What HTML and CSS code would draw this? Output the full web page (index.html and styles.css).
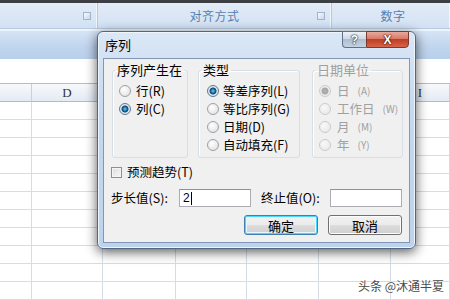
FILE: index.html
```html
<!DOCTYPE html>
<html lang="zh-CN">
<head>
    <meta charset="UTF-8">
    <meta name="viewport" content="width=device-width, initial-scale=1.0">
    <title>序列</title>
    <link rel="stylesheet" href="styles.css">
</head>
<body>
    <div class="app">
        <div class="topline"></div>
        <div class="ribbon-labels">
            <div class="rgroup g1"><span class="launcher"></span></div>
            <div class="rgroup g2"><span class="rlabel">对齐方式</span><span class="launcher"></span></div>
            <div class="rgroup g3"><span class="rlabel">数字</span></div>
        </div>
        <div class="ribbon-base"></div>
        <div class="formula-bar"></div>

        <!-- headers E..H sit under the dialog, so they stay empty -->
        <div class="sheet">
            <div class="hcell"></div><div class="hcell">D</div><div class="hcell"></div><div class="hcell"></div><div class="hcell"></div><div class="hcell"></div><div class="hcell">I</div>
            <div class="cell"></div><div class="cell"></div><div class="cell"></div><div class="cell"></div><div class="cell"></div><div class="cell"></div><div class="cell"></div>
            <div class="cell"></div><div class="cell"></div><div class="cell"></div><div class="cell"></div><div class="cell"></div><div class="cell"></div><div class="cell"></div>
            <div class="cell"></div><div class="cell"></div><div class="cell"></div><div class="cell"></div><div class="cell"></div><div class="cell"></div><div class="cell"></div>
            <div class="cell"></div><div class="cell"></div><div class="cell"></div><div class="cell"></div><div class="cell"></div><div class="cell"></div><div class="cell"></div>
            <div class="cell"></div><div class="cell"></div><div class="cell"></div><div class="cell"></div><div class="cell"></div><div class="cell"></div><div class="cell"></div>
            <div class="cell"></div><div class="cell"></div><div class="cell"></div><div class="cell"></div><div class="cell"></div><div class="cell"></div><div class="cell"></div>
            <div class="cell"></div><div class="cell"></div><div class="cell"></div><div class="cell"></div><div class="cell"></div><div class="cell"></div><div class="cell"></div>
            <div class="cell"></div><div class="cell"></div><div class="cell"></div><div class="cell"></div><div class="cell"></div><div class="cell"></div><div class="cell"></div>
            <div class="cell"></div><div class="cell"></div><div class="cell"></div><div class="cell"></div><div class="cell"></div><div class="cell"></div><div class="cell"></div>
            <div class="cell"></div><div class="cell"></div><div class="cell"></div><div class="cell"></div><div class="cell"></div><div class="cell"></div><div class="cell"></div>
            <div class="cell"></div><div class="cell"></div><div class="cell"></div><div class="cell"></div><div class="cell"></div><div class="cell"></div><div class="cell"></div>
        </div>

        <div class="watermark">头条 @沐通半夏</div>

        <!-- 序列 dialog -->
        <div class="dialog">
            <div class="titlebar">序列</div>
            <div class="caption-btns">
                <span class="cbtn help">?</span>
                <span class="cbtn close">X</span>
            </div>

            <div class="panel">
                <div class="groups">
                    <fieldset class="group grp-dir">
                        <legend>序列产生在</legend>
                        <div class="opt"><span class="radio"></span>行(R)</div>
                        <div class="opt"><span class="radio on"></span>列(C)</div>
                    </fieldset>
                    <fieldset class="group grp-type">
                        <legend>类型</legend>
                        <div class="opt"><span class="radio on"></span>等差序列(L)</div>
                        <div class="opt"><span class="radio"></span>等比序列(G)</div>
                        <div class="opt"><span class="radio"></span>日期(D)</div>
                        <div class="opt"><span class="radio"></span>自动填充(F)</div>
                    </fieldset>
                    <fieldset class="group grp-date disabled">
                        <legend>日期单位</legend>
                        <div class="opt"><span class="radio dot"></span>日<small>(A)</small></div>
                        <div class="opt"><span class="radio"></span>工作日<small>(W)</small></div>
                        <div class="opt"><span class="radio"></span>月<small>(M)</small></div>
                        <div class="opt"><span class="radio"></span>年<small>(Y)</small></div>
                    </fieldset>
                </div>

                <div class="check-row"><span class="checkbox"></span>预测趋势(T)</div>

                <div class="value-row">
                    <span class="vlabel">步长值(S):</span>
                    <span class="field step">2<span class="caret"></span></span>
                    <span class="vlabel stop">终止值(O):</span>
                    <span class="field"></span>
                </div>

                <div class="button-row">
                    <button class="btn default">确定</button>
                    <button class="btn">取消</button>
                </div>
            </div>
        </div>
    </div>
</body>
</html>
```

FILE: styles.css
```css
body {
    margin: 0;
    padding: 0;
    font-family: "Noto Sans CJK SC", "Liberation Sans", sans-serif;
    font-size: 12px;
    background-color: #ffffff;
}
.app {
    position: relative;
    width: 450px;
    height: 300px;
    overflow: hidden;
}
.topline {
    height: 3px;
    background-color: #3c3f44;
}

/* ribbon */
.ribbon-labels {
    display: flex;
    height: 25px;
    background: linear-gradient(#e3ecf7, #d2e1f3);
    border-bottom: 1px solid #b7cbe4;
}
.rgroup {
    position: relative;
    display: flex;
    align-items: center;
    justify-content: center;
    border-right: 1px solid #b3c8e2;
    box-shadow: inset -1px 0 0 #f1f6fc;
}
.g1 { width: 97px; }
.g2 { width: 233px; }
.g3 { flex: 1; border-right: none; }
.rlabel {
    color: #5a7db0;
    font-size: 12px;
    line-height: 16px;
    letter-spacing: 0.5px;
}
.g3 .rlabel {
    margin-left: 4px;
}
.launcher {
    position: absolute;
    right: 6px;
    top: 9px;
    width: 6px;
    height: 6px;
    border: 1px solid #9fb3cc;
    background: linear-gradient(135deg, #f8fbff, #c9d7e8);
}
.ribbon-base {
    height: 28px;
    background: linear-gradient(#d6e4f5, #bfd4ee 60%, #b8cfea);
    border-top: 2px solid #eef4fb;
}
.formula-bar {
    height: 24px;
    background-color: #ffffff;
    border-bottom: 1px solid #a9bfd6;
}

/* worksheet */
.sheet {
    display: grid;
    grid-template-columns: 32px 71px 73px 71px 72px 72px 1fr;
    grid-auto-rows: 18px;
}
.hcell {
    box-sizing: border-box;
    border-right: 1px solid #c5d1e0;
    border-bottom: 1px solid #a9bdd3;
    background: linear-gradient(#f7f9fc, #e4ebf4);
    font-family: "Liberation Serif", serif;
    font-size: 13px;
    color: #333;
    text-align: center;
    line-height: 17px;
}
.cell {
    box-sizing: border-box;
    border-right: 1px solid #d6dce6;
    border-bottom: 1px solid #d6dce6;
}
.watermark {
    position: absolute;
    left: 358px;
    top: 278px;
    font-size: 12px;
    line-height: 16px;
    color: #4a4a4a;
    text-shadow: 0 0 2px #ffffff, 0 0 1px #ffffff;
}

/* dialog */
.dialog {
    position: absolute;
    left: 97px;
    top: 31px;
    width: 319px;
    height: 218px;
    box-sizing: border-box;
    border: 1px solid #52677f;
    border-radius: 6px;
    background: linear-gradient(#dae7f6, #c4d8ef 40%, #bdd3ed);
    box-shadow: 0 3px 12px rgba(0, 0, 0, 0.65), inset 0 0 0 1px #eef5fc;
    padding: 0 5px 5px 5px;
}
.titlebar {
    height: 26px;
    line-height: 26px;
    padding-left: 2px;
    font-size: 13px;
    color: #000;
}
.caption-btns {
    position: absolute;
    top: -1px;
    right: 6px;
    display: flex;
}
.cbtn {
    height: 17px;
    box-sizing: border-box;
    border: 1px solid #5f6f86;
    display: flex;
    align-items: center;
    justify-content: center;
    font-family: "Liberation Sans", sans-serif;
    font-weight: bold;
    color: #ffffff;
    font-size: 12px;
    line-height: 14px;
}
.help {
    width: 24px;
    border-radius: 0 0 0 4px;
    border-right: none;
    background: linear-gradient(#eef2f7, #cdd8e5 45%, #aebdd0 50%, #c4d3e4);
    text-shadow: 0 0 1px #2c3a4e, 0 0 1px #2c3a4e, 0 0 2px #2c3a4e;
}
.close {
    width: 43px;
    border-radius: 0 0 4px 0;
    border-color: #7a3a2e;
    background: linear-gradient(#e9a99b, #d77a66 45%, #c23d22 50%, #d4644a);
    text-shadow: 0 0 1px #4a140a, 0 0 1px #4a140a, 0 0 2px #4a140a;
}
.panel {
    height: 185px;
    box-sizing: border-box;
    border: 1px solid #8197b4;
    background-color: #f0f0f0;
    padding: 3px 0 0 0;
    font-size: 12px;
    color: #000;
}
.groups {
    display: flex;
    margin-left: 8px;
}
.group {
    margin: 0;
    padding: 4px 0 4px 0;
    height: 96px;
    box-sizing: border-box;
    border: 1px solid #d5dfe5;
    border-radius: 3px;
    box-shadow: inset 1px 1px 0 #ffffff;
    min-width: 0;
}
.group legend {
    margin-left: 2px;
    padding: 0 2px;
    font-size: 13px;
    line-height: 16px;
}
.grp-dir { width: 76px; }
.grp-type { width: 102px; margin-left: 10px; }
.grp-date { width: 91px; margin-left: 12px; }
.opt {
    display: flex;
    align-items: center;
    gap: 5px;
    height: 18px;
    padding-left: 6px;
    font-size: 12.5px;
    line-height: 16px;
    white-space: nowrap;
}
.grp-type .opt {
    padding-left: 8px;
    gap: 4px;
}
.grp-date .opt {
    gap: 6px;
}
.disabled {
    color: #a0a0a0;
}
.disabled small {
    font-size: 10px;
    margin-left: 2px;
}
.radio {
    width: 12px;
    height: 12px;
    box-sizing: border-box;
    border-radius: 50%;
    border: 1px solid #9aa1a8;
    background: radial-gradient(circle at 40% 35%, #ffffff, #dcdcdc);
    flex: none;
}
.radio.on {
    border-color: #5f7a93;
    background: radial-gradient(circle, #7fd0ff 0, #1a6ea6 2px, #0c4a78 3px, #e8eef3 4px, #cfd6dc 6px);
}
.disabled .radio {
    border-color: #c8ccd0;
    background: radial-gradient(circle at 40% 35%, #f8f8f8, #e6e6e6);
}
.disabled .radio.dot {
    background: radial-gradient(circle, #b4b4b4 0, #a6a6a6 3px, #f0f0f0 4px, #e2e2e2 6px);
}
.check-row {
    display: flex;
    align-items: center;
    gap: 5px;
    height: 18px;
    margin-top: 5px;
    padding-left: 7px;
    font-size: 12.5px;
    line-height: 16px;
}
.checkbox {
    width: 11px;
    height: 11px;
    box-sizing: border-box;
    border: 1px solid #8f8f8f;
    background: linear-gradient(135deg, #dcdcdc, #f8f8f8);
    box-shadow: inset 0 0 0 1px #f4f4f4;
}
.value-row {
    display: flex;
    align-items: center;
    height: 18px;
    margin-top: 8px;
    padding-left: 7px;
    font-size: 12.5px;
    line-height: 16px;
}
.vlabel {
    width: 68px;
}
.vlabel.stop {
    width: 69px;
    margin-left: 10px;
}
.field {
    width: 72px;
    height: 18px;
    box-sizing: border-box;
    border: 1px solid #abadb3;
    border-top-color: #8e9197;
    background-color: #ffffff;
    font-family: "Liberation Sans", sans-serif;
    font-size: 12px;
    line-height: 16px;
    padding-left: 3px;
    display: flex;
    align-items: center;
}
.caret {
    width: 1px;
    height: 13px;
    background-color: #000;
    margin-left: 1px;
}
.button-row {
    display: flex;
    justify-content: flex-end;
    gap: 10px;
    margin-top: 8px;
    padding-right: 7px;
}
.btn {
    width: 74px;
    height: 20px;
    box-sizing: border-box;
    border: 1px solid #707070;
    border-radius: 3px;
    background: linear-gradient(#f2f2f2, #ebebeb 50%, #dddddd 51%, #cfcfcf);
    box-shadow: inset 0 0 0 1px #fcfcfc;
    font-family: "Noto Sans CJK SC", sans-serif;
    font-size: 13px;
    color: #000;
    padding: 0;
    line-height: 17px;
}
.btn.default {
    border-color: #3c7fb1;
    box-shadow: inset 0 0 0 1px #48d8fb, inset 0 0 0 2px #e8f6fd;
}
```
